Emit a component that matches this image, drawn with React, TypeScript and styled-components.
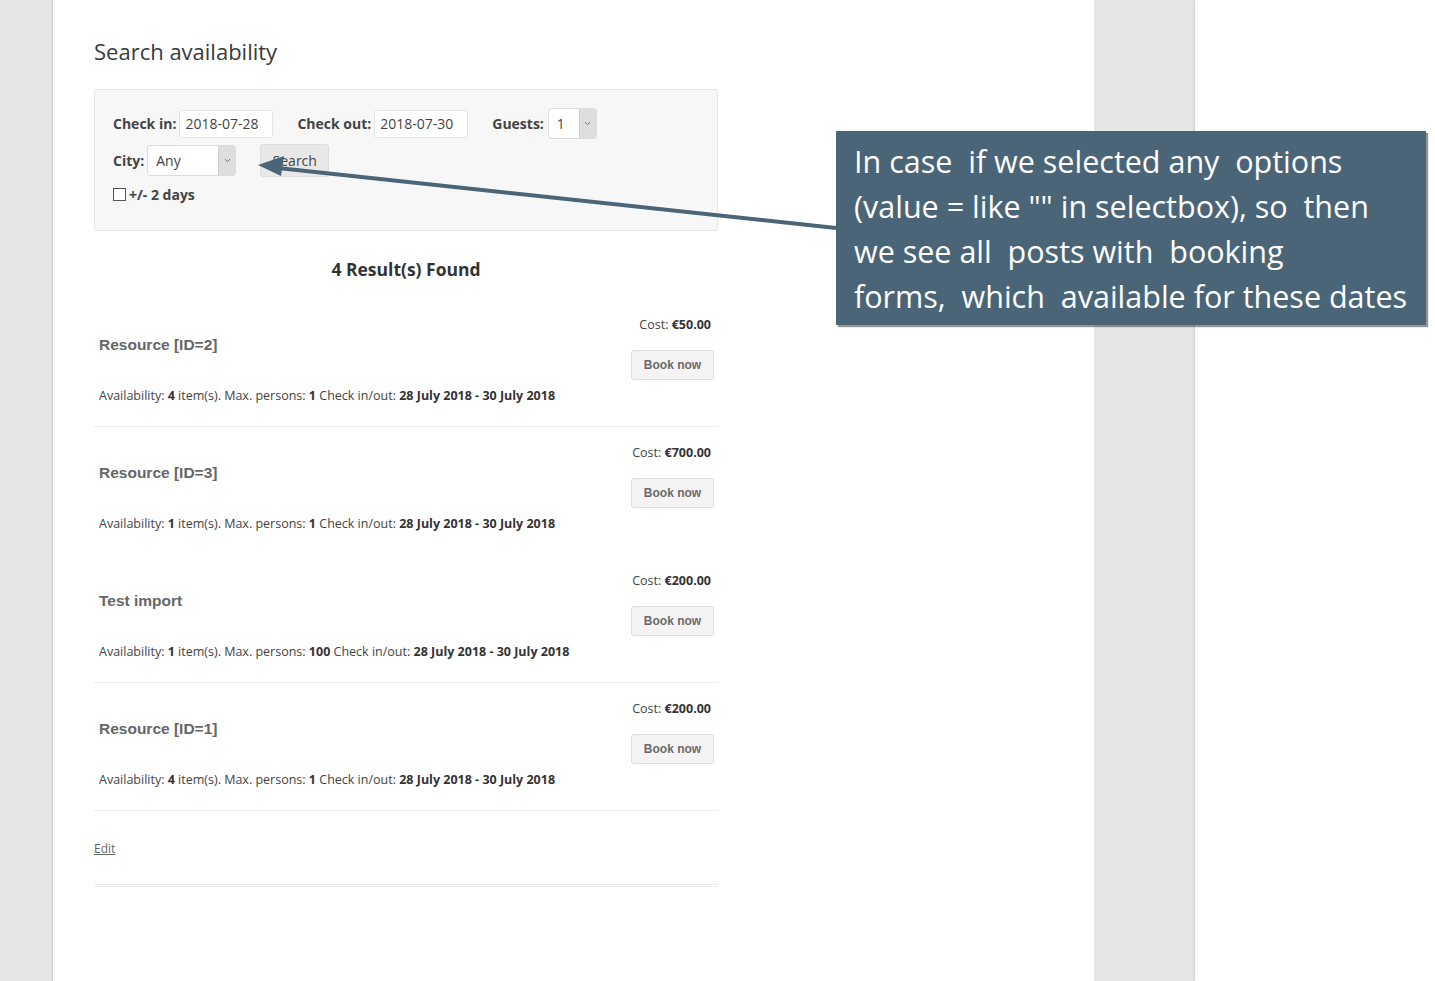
import React from 'react';
import styled, { createGlobalStyle } from 'styled-components';

const GlobalStyle = createGlobalStyle`
  html, body {
    margin: 0;
    padding: 0;
    background: #ffffff;
  }
  body {
    font-family: "Open Sans", "Noto Sans", sans-serif;
    color: #444;
  }
`;

const Page = styled.div`
  position: relative;
  display: flex;
  width: 1435px;
  height: 981px;
  overflow: hidden;
`;

const Gutter = styled.div<{ $w: number }>`
  width: ${p => p.$w}px;
  flex-shrink: 0;
  background: #e6e6e6;
`;

const Main = styled.main`
  width: 1041px;
  flex-shrink: 0;
  background: #fff;
  box-shadow: -1px 0 2px rgba(0, 0, 0, 0.12);
  padding: 35px 0 0 41px;
  box-sizing: border-box;
`;

const Aside = styled.div`
  flex: 1;
  background: #fff;
  box-shadow: -1px 0 2px rgba(0, 0, 0, 0.1);
`;

const Content = styled.div`
  width: 624px;
`;

const Heading = styled.h1`
  margin: 0 0 22px;
  font-size: 22px;
  font-weight: 400;
  line-height: 32px;
  color: #3a3a3a;
`;

const SearchBox = styled.div`
  background: #f7f7f7;
  border: 1px solid #e6e6e6;
  border-radius: 3px;
  padding: 18px 18px 26px;
  display: flex;
  flex-direction: column;
`;

const Row = styled.div<{ $gap?: number }>`
  display: flex;
  align-items: center;
  margin-top: ${p => p.$gap ?? 0}px;
`;

const Field = styled.div`
  display: flex;
  align-items: center;
  margin-right: 24px;
`;

const Label = styled.span`
  font-size: 14px;
  font-weight: 700;
  color: #444;
  margin-right: 3px;
`;

const TextInput = styled.div`
  width: 94px;
  height: 28px;
  box-sizing: border-box;
  background: #fff;
  border: 1px solid #e4e4e4;
  border-radius: 3px;
  padding-left: 5px;
  display: flex;
  align-items: center;
  font-size: 14px;
  color: #444;
`;

const Select = styled.div<{ $w: number }>`
  width: ${p => p.$w}px;
  height: 31px;
  box-sizing: border-box;
  background: #fff;
  border: 1px solid #dcdcdc;
  border-radius: 3px;
  display: flex;
  align-items: stretch;
  font-size: 14px;
  color: #444;
  overflow: hidden;
`;

const SelectValue = styled.span`
  flex: 1;
  display: flex;
  align-items: center;
  padding-left: 8px;
`;

const SelectArrow = styled.span`
  width: 16px;
  background: #dedede;
  border-left: 1px solid #cfcfcf;
  display: flex;
  align-items: center;
  justify-content: center;
`;

const SearchButton = styled.button`
  width: 69px;
  height: 33px;
  background: #e8e8e8;
  border: 1px solid #dedede;
  border-radius: 3px;
  font-family: "Open Sans", sans-serif;
  font-size: 14px;
  color: #444;
  padding: 0;
`;

const CheckRow = styled.label`
  display: flex;
  align-items: center;
  font-size: 14px;
  font-weight: 700;
  color: #444;
  height: 20px;
`;

const Checkbox = styled.span`
  width: 11px;
  height: 11px;
  border: 1px solid #555;
  background: #fff;
  margin-right: 3px;
`;

const ResultsTitle = styled.h2`
  margin: 26px 0 0;
  text-align: center;
  font-size: 17.5px;
  font-weight: 700;
  line-height: 24px;
  color: #333;
  height: 42px;
`;

const Result = styled.div<{ $line: boolean }>`
  height: 128px;
  box-sizing: border-box;
  border-bottom: 1px solid ${p => (p.$line ? '#ececec' : 'transparent')};
  padding: 17px 4px 0 5px;
  display: flex;
  justify-content: space-between;
`;

const ResultInfo = styled.div`
  display: flex;
  flex-direction: column;
`;

const ResultName = styled.div`
  margin-top: 19px;
  font-family: "Liberation Sans", Arial, sans-serif;
  font-size: 15.5px;
  font-weight: 700;
  line-height: 20px;
  color: #666;
`;

const Meta = styled.div`
  margin-top: 32px;
  font-size: 12.5px;
  line-height: 18px;
  color: #444;
  b {
    font-weight: 700;
    color: #333;
  }
`;

const ResultAction = styled.div`
  display: flex;
  flex-direction: column;
  align-items: flex-end;
`;

const Cost = styled.div`
  font-size: 12.5px;
  line-height: 18px;
  color: #444;
  margin-right: 3px;
  b {
    color: #333;
  }
`;

const BookButton = styled.button`
  margin-top: 16px;
  width: 83px;
  height: 30px;
  background: #f4f4f4;
  border: 1px solid #dcdcdc;
  border-radius: 3px;
  font-family: "Liberation Sans", Arial, sans-serif;
  font-size: 12px;
  font-weight: 700;
  color: #6a6a6a;
  padding: 0;
`;

const EditLink = styled.a`
  display: inline-block;
  margin-top: 29px;
  font-size: 12px;
  color: #666;
  text-decoration: underline;
`;

const Footer = styled.div`
  margin-top: 26px;
  height: 1px;
  border-top: 1px solid #ececec;
  border-bottom: 1px solid #ececec;
`;

const Callout = styled.div`
  position: absolute;
  left: 836px;
  top: 131px;
  width: 590px;
  height: 194px;
  box-sizing: border-box;
  background: #4a6578;
  box-shadow: 2px 2px 1px rgba(60, 60, 60, 0.55);
  padding: 8px 0 0 18px;
  color: #fff;
  font-family: "Open Sans", "Noto Sans", sans-serif;
  font-size: 30.5px;
  line-height: 45px;
  white-space: pre;
`;

const ArrowLayer = styled.svg`
  position: absolute;
  left: 0;
  top: 0;
  pointer-events: none;
`;

const Chevron = () => (
  <svg width="7" height="5" viewBox="0 0 7 5">
    <path d="M1 1.2 L3.5 3.6 L6 1.2" fill="none" stroke="#666" strokeWidth="0.9" />
  </svg>
);

type ResultItem = {
  name: string;
  cost: string;
  items: number;
  persons: number;
  line: boolean;
};

const results: ResultItem[] = [
  { name: 'Resource [ID=2]', cost: '€50.00', items: 4, persons: 1, line: true },
  { name: 'Resource [ID=3]', cost: '€700.00', items: 1, persons: 1, line: false },
  { name: 'Test import', cost: '€200.00', items: 1, persons: 100, line: true },
  { name: 'Resource [ID=1]', cost: '€200.00', items: 4, persons: 1, line: true },
];

const calloutText =
  'In case  if we selected any  options\n(value = like "" in selectbox), so  then\nwe see all  posts with  booking\nforms,  which  available for these dates';

const App: React.FC = () => {
  return (
    <Page>
      <GlobalStyle />
      <Gutter $w={53} />
      <Main>
        <Content>
          <Heading>Search availability</Heading>
          <SearchBox>
            <Row>
              <Field>
                <Label>Check in:</Label>
                <TextInput>2018-07-28</TextInput>
              </Field>
              <Field>
                <Label>Check out:</Label>
                <TextInput>2018-07-30</TextInput>
              </Field>
              <Field>
                <Label style={{ marginRight: 4 }}>Guests:</Label>
                <Select $w={49}>
                  <SelectValue>1</SelectValue>
                  <SelectArrow><Chevron /></SelectArrow>
                </Select>
              </Field>
            </Row>
            <Row $gap={5}>
              <Field>
                <Label>City:</Label>
                <Select $w={89}>
                  <SelectValue>Any</SelectValue>
                  <SelectArrow><Chevron /></SelectArrow>
                </Select>
              </Field>
              <SearchButton>Search</SearchButton>
            </Row>
            <Row $gap={7}>
              <CheckRow>
                <Checkbox />
                +/- 2 days
              </CheckRow>
            </Row>
          </SearchBox>

          <ResultsTitle>4 Result(s) Found</ResultsTitle>

          {results.map(r => (
            <Result key={r.name} $line={r.line}>
              <ResultInfo>
                <ResultName>{r.name}</ResultName>
                <Meta>
                  Availability: <b>{r.items}</b> item(s). Max. persons: <b>{r.persons}</b> Check in/out:{' '}
                  <b>28 July 2018 - 30 July 2018</b>
                </Meta>
              </ResultInfo>
              <ResultAction>
                <Cost>
                  Cost: <b>{r.cost}</b>
                </Cost>
                <BookButton>Book now</BookButton>
              </ResultAction>
            </Result>
          ))}

          <EditLink href="#">Edit</EditLink>
          <Footer />
        </Content>
      </Main>
      <Gutter $w={101} />
      <Aside />

      <ArrowLayer width="1435" height="981">
        <line x1="836" y1="228" x2="278" y2="168" stroke="#4a6578" strokeWidth="4" />
        <polygon points="258,165 284,156 281,176" fill="#4a6578" />
      </ArrowLayer>

      <Callout>{calloutText}</Callout>
    </Page>
  );
};

export default App;
